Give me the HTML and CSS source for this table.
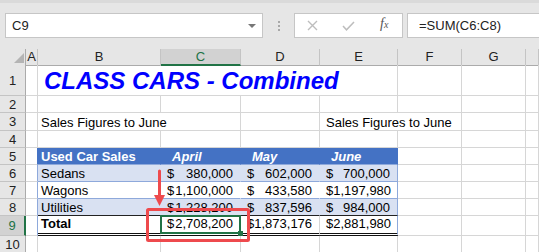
FILE: index.html
```html
<!DOCTYPE html>
<html lang="en">
<head>
    <meta charset="UTF-8">
    <title>CLASS CARS - Combined</title>
    <link rel="stylesheet" href="styles.css">
</head>
<body>
    <div class="bar">
        <div class="namebox"><span>C9</span><span class="caret"></span></div>
        <div class="grip"><i></i><i></i><i></i></div>
        <div class="btns">
            <span class="btn">
                <svg width="11" height="11" viewBox="0 0 11 11"><path d="M1 1L10 10M10 1L1 10" stroke="#bdbdbd" stroke-width="1.4" fill="none"/></svg>
            </span>
            <span class="btn">
                <svg width="13" height="10" viewBox="0 0 13 10"><path d="M1 5L4.5 8.8L12 1" stroke="#bdbdbd" stroke-width="1.5" fill="none"/></svg>
            </span>
            <span class="btn fx">f<sub>x</sub></span>
        </div>
        <div class="formula">=SUM(C6:C8)</div>
    </div>

    <div class="sheet">
        <div class="row head">
            <div class="corner"><span class="tri"></span></div>
            <div class="ch">A</div>
            <div class="ch">B</div>
            <div class="ch sel">C</div>
            <div class="ch">D</div>
            <div class="ch">E</div>
            <div class="ch">F</div>
            <div class="ch">G</div>
            <div class="ch"></div>
        </div>

        <div class="row r1">
            <div class="rh">1</div>
            <div class="c"></div>
            <div class="c title span4">CLASS CARS - Combined</div>
            <div class="c"></div><div class="c"></div><div class="c"></div>
        </div>

        <div class="row r2">
            <div class="rh">2</div>
            <div class="c"></div><div class="c"></div><div class="c"></div><div class="c"></div>
            <div class="c"></div><div class="c"></div><div class="c"></div><div class="c"></div>
        </div>

        <div class="row r3">
            <div class="rh">3</div>
            <div class="c"></div>
            <div class="c span2">Sales Figures to June</div>
            <div class="c"></div>
            <div class="c span2 indent">Sales Figures to June</div>
            <div class="c"></div><div class="c"></div>
        </div>

        <div class="row r4">
            <div class="rh">4</div>
            <div class="c"></div><div class="c"></div><div class="c"></div><div class="c"></div>
            <div class="c"></div><div class="c"></div><div class="c"></div><div class="c"></div>
        </div>

        <div class="row r5">
            <div class="rh">5</div>
            <div class="c edge-hd"></div>
            <div class="c th">Used Car Sales</div>
            <div class="c th mo">April</div>
            <div class="c th mo">May</div>
            <div class="c th mo">June</div>
            <div class="c"></div><div class="c"></div><div class="c"></div>
        </div>

        <div class="row r6">
            <div class="rh">6</div>
            <div class="c edge"></div>
            <div class="c td band">Sedans</div>
            <div class="c td band num"><span>$</span><span>380,000</span></div>
            <div class="c td band num"><span>$</span><span>602,000</span></div>
            <div class="c td band num last"><span>$</span><span>700,000</span></div>
            <div class="c"></div><div class="c"></div><div class="c"></div>
        </div>

        <div class="row r7">
            <div class="rh">7</div>
            <div class="c edge"></div>
            <div class="c td">Wagons</div>
            <div class="c td num"><span>$</span><span>1,100,000</span></div>
            <div class="c td num"><span>$</span><span>433,580</span></div>
            <div class="c td num last"><span>$</span><span>1,197,980</span></div>
            <div class="c"></div><div class="c"></div><div class="c"></div>
        </div>

        <div class="row r8">
            <div class="rh">8</div>
            <div class="c edge"></div>
            <div class="c td band pre-total">Utilities</div>
            <div class="c td band num pre-total"><span>$</span><span>1,228,200</span></div>
            <div class="c td band num pre-total"><span>$</span><span>837,596</span></div>
            <div class="c td band num pre-total last"><span>$</span><span>984,000</span></div>
            <div class="c"></div><div class="c"></div><div class="c"></div>
        </div>

        <div class="row r9">
            <div class="rh sel">9</div>
            <div class="c edge"></div>
            <div class="c total bold">Total</div>
            <div class="c total num active"><span>$</span><span>2,708,200</span></div>
            <div class="c total num"><span>$</span><span>1,873,176</span></div>
            <div class="c total num last"><span>$</span><span>2,881,980</span></div>
            <div class="c"></div><div class="c"></div><div class="c"></div>
        </div>

        <div class="row r10">
            <div class="rh">10</div>
            <div class="c"></div><div class="c"></div><div class="c"></div><div class="c"></div>
            <div class="c"></div><div class="c"></div><div class="c"></div><div class="c"></div>
        </div>
    </div>

    <!-- callout drawn over the sheet -->
    <svg class="callout" width="539" height="252" viewBox="0 0 539 252">
        <rect x="147.5" y="209.5" width="101" height="31" rx="1" fill="none" stroke="#ee4a4d" stroke-width="3"/>
        <line x1="159.5" y1="171" x2="159.5" y2="197" stroke="#ee4a4d" stroke-width="3" stroke-linecap="round"/>
        <polygon points="154,195 165,195 159.5,206" fill="#ee4a4d"/>
    </svg>
</body>
</html>
```

FILE: styles.css
```css
* {
    box-sizing: border-box;
}
body {
    margin: 0;
    width: 539px;
    height: 252px;
    overflow: hidden;
    position: relative;
    font-family: "Liberation Sans", Arial, sans-serif;
    font-size: 13px;
    color: #000;
    background: #fff;
}

/* formula bar */
.bar {
    height: 49px;
    padding: 13px 0 0 5px;
    display: flex;
    align-items: flex-start;
    background: linear-gradient(#dadada 0, #dadada 3px, #e6e6e6 3px);
}
.namebox {
    width: 258px;
    height: 25px;
    border: 1px solid #c6c6c6;
    background: #fff;
    display: flex;
    align-items: center;
    justify-content: space-between;
    padding: 0 6px 0 6px;
    color: #222;
}
.caret {
    width: 0;
    height: 0;
    border-left: 4px solid transparent;
    border-right: 4px solid transparent;
    border-top: 4px solid #777;
}
.grip {
    width: 31px;
    height: 25px;
    display: flex;
    flex-direction: column;
    align-items: center;
    justify-content: center;
    gap: 2px;
}
.grip i {
    display: block;
    width: 2px;
    height: 2px;
    background: #a8a8a8;
}
.btns {
    width: 109px;
    height: 25px;
    border: 1px solid #c6c6c6;
    background: #fff;
    display: flex;
}
.btn {
    width: 36px;
    display: flex;
    align-items: center;
    justify-content: center;
}
.fx {
    font-family: "Liberation Serif", "Times New Roman", serif;
    font-style: italic;
    font-size: 14px;
    color: #555;
    padding-bottom: 3px;
}
.fx sub {
    font-size: 10px;
    vertical-align: -1px;
}
.formula {
    flex: 1;
    height: 25px;
    margin: 0 -3px 0 4px;
    border: 1px solid #c6c6c6;
    background: #fff;
    padding-left: 11px;
    line-height: 23px;
    color: #222;
}

/* sheet grid */
.row {
    display: grid;
    grid-template-columns: 26px 12px 123px 80px 79px 78px 64px 64px 1fr;
}
.head { height: 16px; }
.r1 { height: 31px; }
.r2, .r4, .r5, .r6, .r7, .r8 { height: 17px; }
.r3 { height: 18px; }
.r9 { height: 20px; }
.r10 { height: 17px; }

.corner, .ch {
    background: #e6e6e6;
    border-bottom: 1px solid #ababab;
}
.corner {
    border-right: 1px solid #ababab;
    display: flex;
    align-items: flex-end;
    justify-content: flex-end;
    padding: 0 1px 2px 0;
}
.tri {
    width: 0;
    height: 0;
    border-left: 10px solid transparent;
    border-bottom: 10px solid #b4b4b4;
}
.ch {
    border-right: 1px solid #c4c4c4;
    text-align: center;
    line-height: 15px;
    color: #222;
}
.ch.sel {
    background: #d2d2d2;
    border-bottom: 2px solid #217346;
    color: #217346;
}
.rh {
    background: #e6e6e6;
    border-right: 1px solid #ababab;
    border-bottom: 1px solid #c4c4c4;
    display: flex;
    align-items: center;
    justify-content: center;
    color: #222;
}
.rh.sel {
    background: #d2d2d2;
    border-right: 2px solid #217346;
    color: #217346;
}

.c {
    border-right: 1px solid #d6d6d6;
    border-bottom: 1px solid #d6d6d6;
    display: flex;
    align-items: flex-end;
    line-height: 15px;
    padding: 0 3px;
    white-space: nowrap;
}
.c.indent { padding-left: 6px; }
.span2 { grid-column: span 2; }
.span4 { grid-column: span 4; }

.title {
    font-size: 24px;
    line-height: 27px;
    font-weight: bold;
    font-style: italic;
    color: #0000ff;
    padding: 0 0 1px 6px;
}

/* sales table */
.edge-hd { border-right-color: #4472c4; }
.edge { border-right-color: #8ea9db; }
.th {
    background: #4472c4;
    border-right-color: #4472c4;
    border-bottom-color: #8ea9db;
    color: #fff;
    font-weight: bold;
}
.th.mo {
    font-style: italic;
    padding-left: 11px;
}
.td {
    background: #fff;
    border-right-color: #fff;
    border-bottom-color: #8ea9db;
}
.td.band {
    background: #d9e1f2;
    border-right-color: #d9e1f2;
}
.td.last, .total.last {
    border-right-color: #8ea9db;
}
.td.pre-total {
    border-bottom-color: #222;
}
.num {
    justify-content: space-between;
    padding: 0 7px 0 6px;
}
.total {
    border-bottom: 3px double #111;
    padding-bottom: 2px;
}
.total.num {
    padding: 0 7px 2px 6px;
}
.bold { font-weight: bold; }

/* active cell C9 */
.active {
    position: relative;
    border-right-color: #fff;
}
.active::after {
    content: "";
    position: absolute;
    left: -1px;
    top: -1px;
    right: -1px;
    bottom: -1px;
    border: 2px solid #217346;
}
.active::before {
    content: "";
    position: absolute;
    right: -3px;
    bottom: -3px;
    width: 5px;
    height: 5px;
    background: #217346;
    z-index: 1;
}

.callout {
    position: absolute;
    left: 0;
    top: 0;
}
```
